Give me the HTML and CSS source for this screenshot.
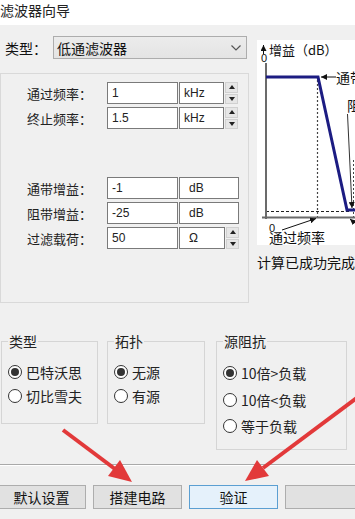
FILE: index.html
```html
<!DOCTYPE html>
<html lang="zh-CN">
<head>
<meta charset="utf-8">
<title>滤波器向导</title>
<link rel="stylesheet" href="styles.css">
</head>
<body>
<div class="window">
  <div class="titlebar">滤波器向导</div>

  <div class="top">
    <div class="left">
      <div class="type-row">
        <span class="type-label">类型：</span>
        <div class="combo">
          <span class="combo-text">低通滤波器</span>
          <svg class="chev" width="10" height="6" viewBox="0 0 10 6"><polyline points="0.5,0.5 5,5 9.5,0.5" fill="none" stroke="#555" stroke-width="1.2"/></svg>
        </div>
      </div>

      <div class="params">
        <div class="row">
          <span class="lbl">通过频率：</span>
          <span class="field">1</span>
          <span class="unit unit-k">kHz</span>
          <span class="spin"><span class="up"></span><span class="down"></span></span>
        </div>
        <div class="row">
          <span class="lbl">终止频率：</span>
          <span class="field">1.5</span>
          <span class="unit unit-k">kHz</span>
          <span class="spin"><span class="up"></span><span class="down"></span></span>
        </div>
        <div class="row row-gap">
          <span class="lbl">通带增益：</span>
          <span class="field">-1</span>
          <span class="unit unit-wide">dB</span>
        </div>
        <div class="row">
          <span class="lbl">阻带增益：</span>
          <span class="field">-25</span>
          <span class="unit unit-wide">dB</span>
        </div>
        <div class="row">
          <span class="lbl">过滤载荷：</span>
          <span class="field">50</span>
          <span class="unit unit-o">Ω</span>
          <span class="spin"><span class="up"></span><span class="down"></span></span>
        </div>
      </div>
    </div>

    <div class="right">
      <div class="chart">
        <svg width="120" height="205" viewBox="0 0 120 205">
          <defs>
            <marker id="ah" viewBox="0 0 8 8" refX="8" refY="4" markerWidth="6" markerHeight="6" orient="auto">
              <path d="M0,0 L8,4 L0,8 z" fill="#111"/>
            </marker>
          </defs>
          <!-- y axis label -->
          <line x1="6.5" y1="14" x2="6.5" y2="5" stroke="#111" stroke-width="1" marker-end="url(#ah)"/>
          <text x="12" y="15" class="ct">增益（dB）</text>
          <text x="4" y="22" class="cn">0</text>
          <!-- guides -->
          <line x1="60.5" y1="40" x2="60.5" y2="177" stroke="#444" stroke-width="1.2" stroke-dasharray="2,2"/>
          <line x1="9" y1="171.5" x2="92" y2="171.5" stroke="#222" stroke-width="1" stroke-dasharray="3,2"/>
          <line x1="96.5" y1="120" x2="96.5" y2="177" stroke="#444" stroke-width="1" stroke-dasharray="2,2"/>
          <!-- axes -->
          <line x1="9" y1="23" x2="9" y2="179" stroke="#6b6b6b" stroke-width="2"/>
          <line x1="5" y1="177.5" x2="120" y2="177.5" stroke="#6b6b6b" stroke-width="2"/>
          <!-- response -->
          <polyline points="9,37 61,37 90,170 120,170" fill="none" stroke="#1c1c82" stroke-width="3" stroke-linejoin="miter"/>
          <!-- annotations -->
          <line x1="79" y1="37" x2="64" y2="37" stroke="#111" stroke-width="1" marker-end="url(#ah)"/>
          <text x="79" y="43" class="ct2">通带增益</text>
          <text x="90" y="71" class="ct2">阻带增益</text>
          <line x1="90.5" y1="74" x2="95" y2="168" stroke="#333" stroke-width="1" marker-end="url(#ah)"/>
          <text x="12" y="192" class="cn">0</text>
          <line x1="25" y1="190" x2="59" y2="178.5" stroke="#111" stroke-width="1" marker-end="url(#ah)"/>
          <line x1="104" y1="188" x2="93" y2="179" stroke="#111" stroke-width="1" marker-end="url(#ah)"/>
          <text x="12" y="203" class="ct2">通过频率</text>
        </svg>
      </div>
      <div class="status">计算已成功完成</div>
    </div>
  </div>

  <div class="groups">
    <fieldset class="grp grp-type">
      <legend>类型</legend>
      <div class="radio on"><span class="dot"></span>巴特沃思</div>
      <div class="radio"><span class="dot"></span>切比雪夫</div>
    </fieldset>
    <fieldset class="grp grp-topo">
      <legend>拓扑</legend>
      <div class="radio on"><span class="dot"></span>无源</div>
      <div class="radio"><span class="dot"></span>有源</div>
    </fieldset>
    <fieldset class="grp grp-src">
      <legend>源阻抗</legend>
      <div class="radio tall on"><span class="dot"></span>10倍&gt;负载</div>
      <div class="radio tall"><span class="dot"></span>10倍&lt;负载</div>
      <div class="radio tall"><span class="dot"></span>等于负载</div>
    </fieldset>
  </div>

  <div class="sep"></div>

  <div class="buttons">
    <button class="btn btn-first">默认设置</button>
    <button class="btn">搭建电路</button>
    <button class="btn btn-focus">验证</button>
    <button class="btn"></button>
  </div>

  <svg class="annot" width="355" height="519" viewBox="0 0 355 519">
    <line x1="63" y1="430" x2="115" y2="469" stroke="#e2393a" stroke-width="4"/>
    <polygon points="132,482 108,476 120,460" fill="#e2393a"/>
    <line x1="362" y1="394" x2="263" y2="468" stroke="#e2393a" stroke-width="4"/>
    <polygon points="245,481 257,460 269,476" fill="#e2393a"/>
  </svg>
</div>
</body>
</html>
```

FILE: styles.css
```css
* { box-sizing: border-box; }

html, body {
  margin: 0;
  padding: 0;
}

body {
  width: 355px;
  height: 519px;
  overflow: hidden;
  background: #f0f0f0;
  font-family: "Noto Sans CJK SC", "Noto Sans", sans-serif;
  color: #111;
}

.window {
  position: relative;
  width: 355px;
  height: 519px;
  overflow: hidden;
}

.titlebar {
  height: 25px;
  background: #ffffff;
  font-size: 14px;
  line-height: 14px;
  padding-top: 3px;
  padding-left: 0;
  color: #222;
}

.top {
  display: flex;
  align-items: flex-start;
}

.left {
  width: 249px;
  flex-shrink: 0;
}

.type-row {
  display: flex;
  align-items: center;
  margin-top: 11px;
  height: 23px;
}

.type-label {
  width: 53px;
  padding-left: 5px;
  font-size: 14px;
  line-height: 14px;
}

.combo {
  width: 194px;
  height: 23px;
  border: 1px solid #adadad;
  background: linear-gradient(#ececec, #e4e4e4);
  display: flex;
  align-items: center;
  justify-content: space-between;
  padding: 0 5px 0 3px;
}

.combo-text {
  font-size: 14px;
  line-height: 14px;
}

.chev { display: block; }

.params {
  margin-top: 14px;
  height: 230px;
  border: 1px solid #d9d9d9;
  padding-top: 8px;
}

.row {
  display: flex;
  align-items: center;
  height: 22px;
  margin-bottom: 3px;
}

.row-gap { margin-top: 48px; }

.lbl {
  width: 106px;
  padding-left: 26px;
  font-size: 13px;
  line-height: 13px;
  color: #222;
}

.field, .unit {
  height: 22px;
  border: 1px solid #7a7a7a;
  background: #fff;
  font-family: "Liberation Sans", Arial, sans-serif;
  font-size: 12px;
  line-height: 20px;
  color: #222;
}

.field {
  width: 71px;
  padding-left: 4px;
}

.unit { margin-left: 1px; }
.unit-k { width: 45px; padding-left: 4px; }
.unit-o { width: 46px; padding-left: 9px; }
.unit-wide { width: 60px; padding-left: 9px; }

.spin {
  margin-left: 1px;
  width: 13px;
  height: 22px;
  display: flex;
  flex-direction: column;
  gap: 1px;
}

.up, .down {
  flex: 1;
  background: #e6e6e6;
  border: 1px solid #d0d0d0;
  display: flex;
  align-items: center;
  justify-content: center;
}

.up::before {
  content: "";
  border-left: 3px solid transparent;
  border-right: 3px solid transparent;
  border-bottom: 4px solid #222;
}

.down::before {
  content: "";
  border-left: 3px solid transparent;
  border-right: 3px solid transparent;
  border-top: 4px solid #222;
}

.right {
  margin-left: 8px;
  width: 120px;
  flex-shrink: 0;
}

.chart {
  margin-top: 15px;
  width: 120px;
  height: 205px;
  background: #ffffff;
}

.chart svg { display: block; }

.ct {
  font-family: "Noto Sans CJK SC", sans-serif;
  font-size: 13px;
  fill: #111;
}

.ct2 {
  font-family: "Noto Sans CJK SC", sans-serif;
  font-size: 14px;
  fill: #111;
}

.cn {
  font-family: "Liberation Sans", Arial, sans-serif;
  font-size: 11px;
  fill: #111;
}

.status {
  margin-top: 10px;
  font-size: 14px;
  line-height: 14px;
  white-space: nowrap;
  color: #111;
}

.groups {
  display: flex;
  align-items: flex-start;
  margin-top: 31px;
  padding-left: 1px;
}

.grp {
  margin: 0;
  border: 1px solid #d5d5d5;
  padding: 12px 0 0 6px;
  min-width: 0;
}

.grp legend {
  padding: 0 1px;
  font-size: 14px;
  line-height: 14px;
  color: #222;
}

.grp-type { width: 97px; height: 90px; }
.grp-topo { width: 98px; height: 90px; margin-left: 9px; }
.grp-src { width: 131px; height: 116px; margin-left: 11px; }

.radio {
  display: flex;
  align-items: center;
  height: 24px;
  font-size: 14px;
  line-height: 14px;
  color: #222;
  white-space: nowrap;
}

.radio.tall { height: 26.5px; }

.dot {
  width: 14px;
  height: 14px;
  border: 1px solid #333;
  border-radius: 50%;
  background: #fff;
  margin-right: 4px;
  flex-shrink: 0;
  display: flex;
  align-items: center;
  justify-content: center;
}

.radio.on .dot::before {
  content: "";
  width: 8px;
  height: 8px;
  border-radius: 50%;
  background: #333;
}

.sep {
  margin-top: 14px;
  height: 2px;
  border-top: 1px solid #a9a9a9;
  border-bottom: 1px solid #ffffff;
}

.buttons {
  display: flex;
  gap: 7px;
  margin-top: 19px;
  margin-left: -3px;
}

.btn {
  width: 89px;
  height: 24px;
  flex-shrink: 0;
  border: 1px solid #adadad;
  background: #e1e1e1;
  font-family: "Noto Sans CJK SC", sans-serif;
  font-size: 14px;
  line-height: 14px;
  color: #111;
  padding: 0;
}

.btn-focus {
  background: #e5f1fb;
  border-color: #5b9fd2;
}

.annot {
  position: absolute;
  left: 0;
  top: 0;
  pointer-events: none;
}
```
